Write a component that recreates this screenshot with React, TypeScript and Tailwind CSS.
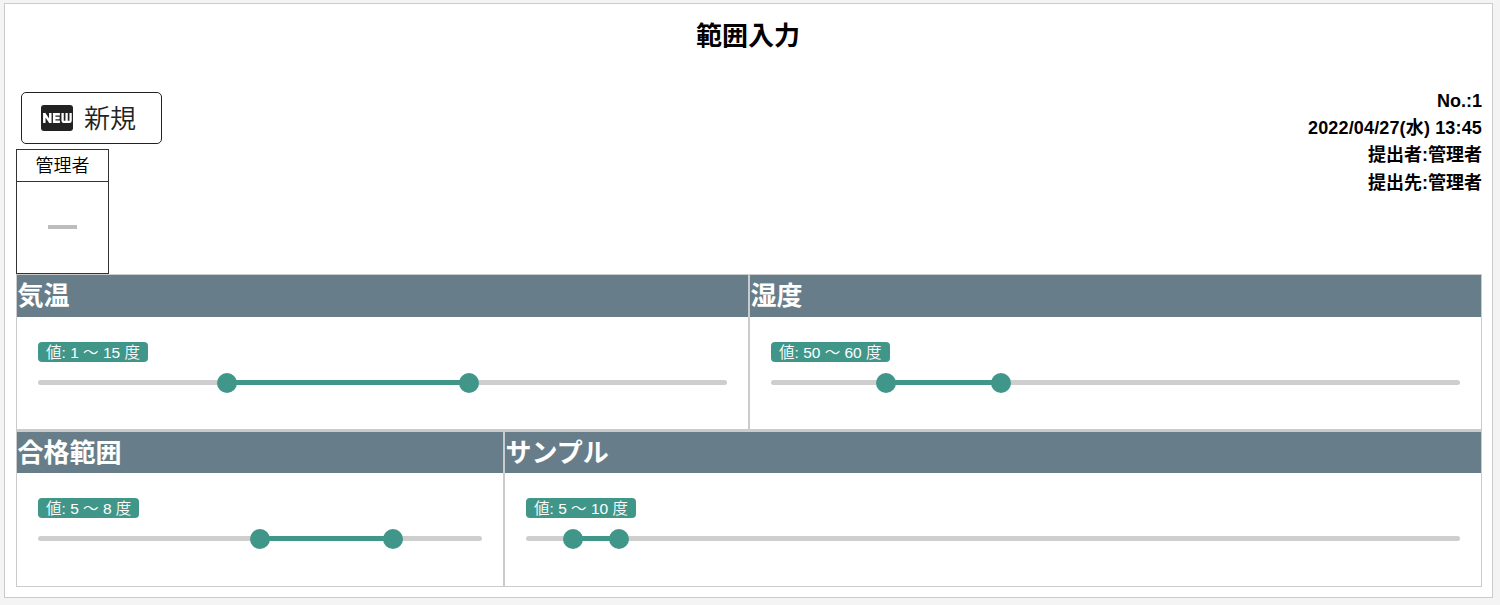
type RangeFieldProps = {
  title: string;
  low: number;
  high: number;
  startPct: number;
  endPct: number;
};

function RangeField({ title, low, high, startPct, endPct }: RangeFieldProps) {
  return (
    <section className="min-w-0 bg-white">
      <h2 className="flex h-[42px] items-center bg-[#677e8a] pl-[0.5px] text-[26px] leading-none font-bold whitespace-nowrap text-white group-last:h-[41px]">
        {title}
      </h2>
      <div className="px-[21px] pt-[24.5px]">
        <span className="flex h-[20.5px] w-fit items-center rounded bg-[#41968a] px-2 pt-px text-[15.5px] leading-none font-[350] whitespace-nowrap text-white">
          値: {low} ～ {high} 度
        </span>
        <div className="relative mt-[18px] h-[5px] rounded-full bg-[#cecece]">
          <div
            className="absolute inset-y-0 bg-[#41968a]"
            style={{ left: `${startPct}%`, right: `${100 - endPct}%` }}
          />
          <div
            className="absolute top-1/2 size-5 -translate-1/2 rounded-full bg-[#41968a]"
            style={{ left: `${startPct}%` }}
          />
          <div
            className="absolute top-1/2 size-5 -translate-1/2 rounded-full bg-[#41968a]"
            style={{ left: `${endPct}%` }}
          />
        </div>
      </div>
    </section>
  );
}

function NewIcon() {
  return (
    <svg viewBox="0 0 32 26" className="mr-[11px] ml-1 h-[26px] w-8 shrink-0" aria-hidden="true">
      <rect width="32" height="26" rx="3" fill="#222" />
      <g fill="none" stroke="#fff" strokeWidth="2.5">
        <path d="M3.3 18V8M3.2 8.4 9.4 17.6M9.3 18V8" />
        <path d="M18.9 9.2H13.2V16.8H18.9M13.2 13H18.6" />
        <path
          d="M21.6 8V15.8Q21.6 16.9 22.7 16.9H28.5Q29.6 16.9 29.6 15.8V8M25.6 8V16.8"
          strokeWidth="2.3"
        />
      </g>
    </svg>
  );
}

export default function App() {
  return (
    <div className="h-[605px] bg-[#f4f4f4] pt-[3px] pl-1 font-['Liberation_Sans','Noto_Sans_CJK_JP',sans-serif] text-black">
      <main className="h-[595px] w-[1489px] border border-[#cbcbcb] bg-white pr-[10px] pl-[11px]">
        <h1 className="flex h-[88px] items-start justify-center pt-[19px] pr-[2px] text-[26px] leading-[26px] font-bold">
          範囲入力
        </h1>
        <div className="flex h-[182px] justify-between">
          <div>
            <button className="ml-[5px] flex h-[52px] w-[141px] items-center rounded-[5px] border border-[#222] bg-white pl-[15px] text-[26px] leading-none font-[350] text-[#222]">
              <NewIcon />
              <span className="pt-[2px]">新規</span>
            </button>
            <div className="mt-[5px] h-[125px] w-[93px] border border-[#333]">
              <div className="flex h-8 items-center justify-center border-b border-[#333] text-lg leading-none font-[350]">
                管理者
              </div>
              <div className="flex h-[91px] items-center justify-center">
                <div className="mb-[2px] h-1 w-[29px] bg-[#bdbdbd]" />
              </div>
            </div>
          </div>
          <div className="-mt-1 text-right text-lg leading-[27.2px] font-bold">
            <p>No.:1</p>
            <p className="tracking-[0.15px]">2022/04/27(水) 13:45</p>
            <p>提出者:管理者</p>
            <p>提出先:管理者</p>
          </div>
        </div>
        <div className="flex h-[313px] w-[1466px] flex-col gap-[3px] border border-[#cbcbcb] bg-[#cbcbcb]">
          <div className="group grid h-[154px] grid-cols-[731px_731px] gap-[2px]">
            <RangeField title="気温" low={1} high={15} startPct={27.5} endPct={62.5} />
            <RangeField title="湿度" low={50} high={60} startPct={16.67} endPct={33.33} />
          </div>
          <div className="group grid h-[154px] grid-cols-[486px_976px] gap-[2px]">
            <RangeField title="合格範囲" low={5} high={8} startPct={50} endPct={80} />
            <RangeField title="サンプル" low={5} high={10} startPct={5} endPct={10} />
          </div>
        </div>
      </main>
    </div>
  );
}
